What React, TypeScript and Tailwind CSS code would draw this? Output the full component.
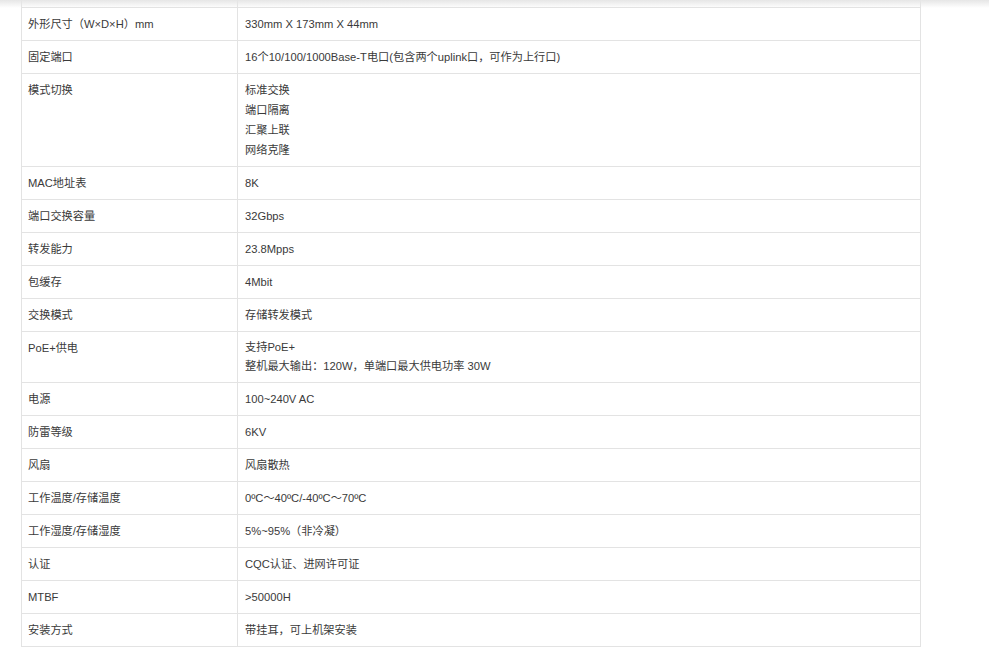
import React from 'react';

interface SpecRow {
  label: string;
  value: string[];
  tight?: boolean;
}

const specs: SpecRow[] = [
  { label: '外形尺寸（W×D×H）mm', value: ['330mm X 173mm X 44mm'] },
  { label: '固定端口', value: ['16个10/100/1000Base-T电口(包含两个uplink口，可作为上行口)'] },
  { label: '模式切换', value: ['标准交换', '端口隔离', '汇聚上联', '网络克隆'] },
  { label: 'MAC地址表', value: ['8K'] },
  { label: '端口交换容量', value: ['32Gbps'] },
  { label: '转发能力', value: ['23.8Mpps'] },
  { label: '包缓存', value: ['4Mbit'] },
  { label: '交换模式', value: ['存储转发模式'] },
  { label: 'PoE+供电', value: ['支持PoE+', '整机最大输出：120W，单端口最大供电功率 30W'], tight: true },
  { label: '电源', value: ['100~240V AC'] },
  { label: '防雷等级', value: ['6KV'] },
  { label: '风扇', value: ['风扇散热'] },
  { label: '工作温度/存储温度', value: ['0ºC～40ºC/-40ºC～70ºC'] },
  { label: '工作湿度/存储湿度', value: ['5%~95%（非冷凝）'] },
  { label: '认证', value: ['CQC认证、进网许可证'] },
  { label: 'MTBF', value: ['>50000H'] },
  { label: '安装方式', value: ['带挂耳，可上机架安装'] },
];

const App = () => {
  return (
    <div className="relative min-h-[664px] w-[989px] overflow-hidden bg-white font-['Liberation_Sans','Noto_Sans_CJK_SC',sans-serif] text-[11.2px] text-[#3a3a3a]">
      {/* header shadow from the page above */}
      <div className="pointer-events-none absolute inset-x-0 top-0 h-[8px] bg-gradient-to-b from-[#e6e6e6] to-transparent" />

      <div className="ml-[21px] -mt-[25px] w-[900px] border border-t-0 border-[#e3e3e3]">
        {/* row cut off by the scroll */}
        <div className="flex h-[33px] border-b border-[#e3e3e3]">
          <div className="w-[216px] border-r border-[#e3e3e3]" />
          <div className="flex-1" />
        </div>

        {specs.map((row, i) => (
          <div
            key={row.label}
            className={`flex ${i < specs.length - 1 ? 'border-b border-[#e3e3e3]' : ''}`}
          >
            <div className="w-[216px] border-r border-[#e3e3e3] px-[6px] py-[6px] leading-[20px]">
              {row.label}
            </div>
            <div className={`flex-1 px-[7px] py-[6px] ${row.tight ? 'leading-[19px]' : 'leading-[20px]'}`}>
              {row.value.map((line) => (
                <div key={line}>{line}</div>
              ))}
            </div>
          </div>
        ))}
      </div>
    </div>
  );
};

export default App;
